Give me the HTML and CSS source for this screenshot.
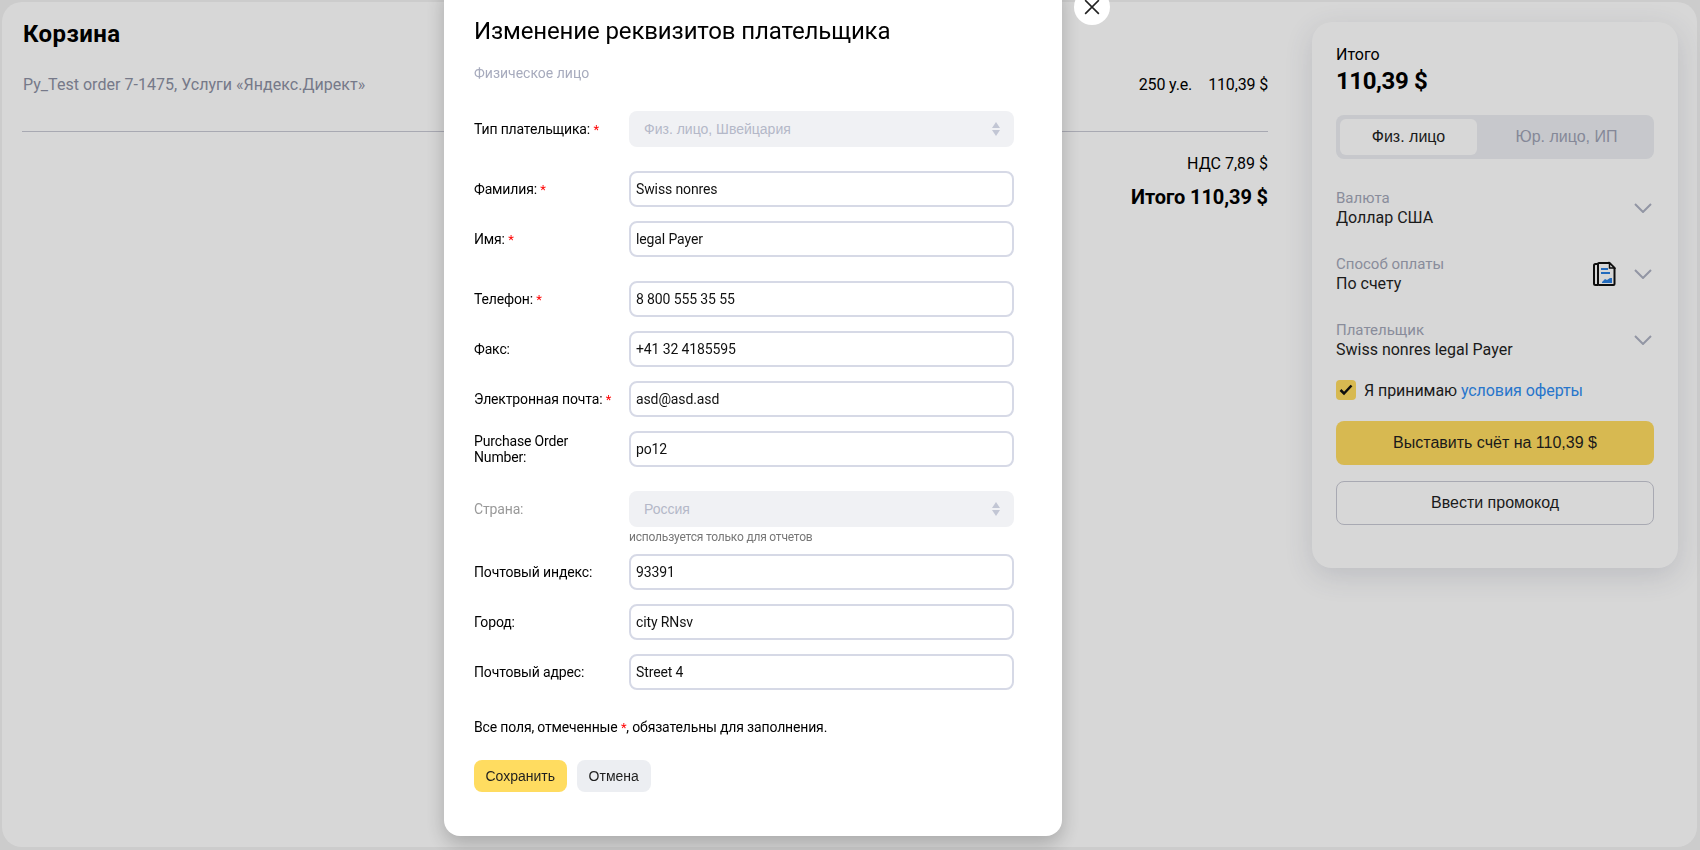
FILE: index.html
```html
<!DOCTYPE html>
<html lang="ru">
<head>
<meta charset="utf-8">
<title>Корзина</title>
<link rel="stylesheet" href="styles.css">
</head>
<body>
<div class="page">
  <main class="cart">
    <h1 class="cart-title">Корзина</h1>
    <div class="cart-row">
      <span class="cart-name">Py_Test order 7-1475, Услуги «Яндекс.Директ»</span>
      <span class="cart-prices"><span>250 у.е.</span><span>110,39 $</span></span>
    </div>
    <div class="cart-totals">
      <div class="vat">НДС 7,89 $</div>
      <div class="total">Итого 110,39 $</div>
    </div>
  </main>
  <aside class="side">
    <div class="side-label">Итого</div>
    <div class="side-sum">110,39 $</div>
    <div class="segment">
      <div class="seg-item seg-active">Физ. лицо</div>
      <div class="seg-item seg-other">Юр. лицо, ИП</div>
    </div>
    <div class="choice">
      <div class="choice-text"><div class="choice-name">Валюта</div><div class="choice-value">Доллар США</div></div>
      <svg class="chevron" viewBox="0 0 18 10"><path d="M1 1l8 8 8-8"/></svg>
    </div>
    <div class="choice">
      <div class="choice-text"><div class="choice-name">Способ оплаты</div><div class="choice-value">По счету</div></div>
      <svg class="doc" viewBox="0 0 24 26">
        <path class="doc-line" d="M6 3H3.500A1.500 1.500 0 0 0 2 4.500V22.500A1.500 1.500 0 0 0 3.500 24H6"/>
        <path class="doc-line" d="M7 2H17.500L22.500 7V23A1 1 0 0 1 21.500 24H7A1 1 0 0 1 6 23V3A1 1 0 0 1 7 2Z"/>
        <path class="doc-fold" d="M17.500 2L22.500 7H17.500Z"/>
        <path class="doc-blue" d="M9 7h7v2H9zM9 11h9v2H9zM10 21l3-3 2 1 3-2h2v5H10z"/>
      </svg>
      <svg class="chevron" viewBox="0 0 18 10"><path d="M1 1l8 8 8-8"/></svg>
    </div>
    <div class="choice">
      <div class="choice-text"><div class="choice-name">Плательщик</div><div class="choice-value">Swiss nonres legal Payer</div></div>
      <svg class="chevron" viewBox="0 0 18 10"><path d="M1 1l8 8 8-8"/></svg>
    </div>
    <div class="accept">
      <span class="check"><svg viewBox="0 0 14 12"><path d="M1.500 6l3.500 3.500 7.500-8"/></svg></span>
      <span>Я принимаю <a class="link" href="#">условия оферты</a></span>
    </div>
    <button class="side-btn side-btn-main">Выставить счёт на 110,39 $</button>
    <button class="side-btn side-btn-line">Ввести промокод</button>
  </aside>
</div>
<div class="overlay"></div>
<div class="modal-wrap">
  <section class="modal">
    <h2 class="modal-title">Изменение реквизитов плательщика</h2>
    <div class="modal-sub">Физическое лицо</div>
    <form class="form">
      <div class="row row-first"><label class="lbl">Тип плательщика: <i>*</i></label>
        <div class="select">Физ. лицо, Швейцария<svg class="updown" viewBox="0 0 8 14"><path d="M4 0l4 6H0zM4 14L0 8h8z"/></svg></div></div>
      <div class="row row-gap"><label class="lbl">Фамилия: <i>*</i></label><input class="inp" value="Swiss nonres"></div>
      <div class="row"><label class="lbl">Имя: <i>*</i></label><input class="inp" value="legal Payer"></div>
      <div class="row row-gap"><label class="lbl">Телефон: <i>*</i></label><input class="inp" value="8 800 555 35 55"></div>
      <div class="row"><label class="lbl">Факс:</label><input class="inp" value="+41 32 4185595"></div>
      <div class="row"><label class="lbl">Электронная почта: <i>*</i></label><input class="inp" value="asd@asd.asd"></div>
      <div class="row"><label class="lbl lbl-two">Purchase Order Number:</label><input class="inp" value="po12"></div>
      <div class="row row-gap"><label class="lbl lbl-off">Страна:</label>
        <div class="select">Россия<svg class="updown" viewBox="0 0 8 14"><path d="M4 0l4 6H0zM4 14L0 8h8z"/></svg></div></div>
      <div class="hint">используется только для отчетов</div>
      <div class="row row-after"><label class="lbl">Почтовый индекс:</label><input class="inp" value="93391"></div>
      <div class="row"><label class="lbl">Город:</label><input class="inp" value="city RNsv"></div>
      <div class="row"><label class="lbl">Почтовый адрес:</label><input class="inp" value="Street 4"></div>
      <p class="note">Все поля, отмеченные <i>*</i>, обязательны для заполнения.</p>
      <div class="actions">
        <button type="button" class="btn btn-save">Сохранить</button>
        <button type="button" class="btn btn-cancel">Отмена</button>
      </div>
    </form>
    <button class="close" aria-label="Закрыть"><svg viewBox="0 0 14 14"><path d="M1 1l12 12M13 1L1 13"/></svg></button>
  </section>
</div>
</body>
</html>
```
FILE: styles.css
```css
* { box-sizing: border-box; }
html, body { margin: 0; height: 100%; overflow: hidden; }
body {
  background: #f2f2f2;
  font-family: Roboto, "Liberation Sans", sans-serif;
  color: #000;
}
.page {
  position: relative;
  margin: 2px 3px 3px 2px;
  height: 845px;
  background: #fff;
  border-radius: 20px;
  display: flex;
  align-items: flex-start;
  padding: 20px 19px 0 20px;
}
.cart { flex: 1; min-width: 0; }
.cart-title { margin: 0 0 0 1px; font-size: 24px; line-height: 24px; font-weight: 700; letter-spacing: .4px; }
.cart-row {
  display: flex;
  justify-content: space-between;
  align-items: center;
  margin-top: 12px;
  height: 74px;
  padding: 0 0 20px 1px;
  border-bottom: 1px solid #c8c9d4;
  font-size: 16px;
}
.cart-name { color: #8c90a3; letter-spacing: .03px; }
.cart-prices { display: flex; gap: 16px; letter-spacing: -.15px; }
.cart-totals { margin-top: 21px; text-align: right; }
.vat { font-size: 16px; line-height: 22px; }
.total { margin-top: 10px; font-size: 20px; line-height: 24px; font-weight: 700; letter-spacing: -.1px; }

.side {
  width: 366px;
  height: 546px;
  margin-left: 44px;
  padding: 23px 24px 0;
  background: #fff;
  border-radius: 20px;
  box-shadow: 0 8px 28px rgba(60, 66, 100, .16);
  flex: none;
}
.side-label { font-size: 16px; line-height: 20px; }
.side-sum { margin-top: 1px; font-size: 24px; line-height: 30px; font-weight: 700; letter-spacing: -.4px; }
.segment {
  margin-top: 19px;
  height: 44px;
  padding: 4px;
  display: flex;
  background: #eceef2;
  border-radius: 8px;
  font-family: "Liberation Sans", sans-serif;
  font-size: 16px;
}
.seg-item { flex: 1; display: flex; align-items: center; justify-content: center; color: #9ea2b5; }
.seg-other { padding-left: 6px; }
.seg-active { flex: 0 0 137px; background: #fff; color: #1f1f1f; border-radius: 6px; }
.choice { display: flex; align-items: center; height: 41px; margin-top: 25px; }
.segment + .choice { margin-top: 28px; }
.choice-text { flex: 1; }
.choice-name { font-size: 15px; line-height: 20px; color: #a3a7b8; }
.choice-value { font-size: 16px; line-height: 20px; color: #1f1f1f; }
.chevron { width: 18px; height: 10px; margin-right: 2px; fill: none; stroke: #aeb2c3; stroke-width: 2; }
.doc { width: 24px; height: 26px; margin-right: 18px; }
.doc-line { fill: none; stroke: #111; stroke-width: 2; }
.doc-fold { fill: #fff; stroke: #111; stroke-width: 1.500; }
.doc-blue { fill: #2a7fe0; }
.accept { display: flex; align-items: center; gap: 8px; margin-top: 20px; height: 20px; font-size: 16px; color: #1f1f1f; letter-spacing: -.07px; }
.check {
  width: 20px; height: 20px;
  display: flex; align-items: center; justify-content: center;
  background: #ffdc60;
  border-radius: 4px;
}
.check svg { width: 14px; height: 12px; fill: none; stroke: #111; stroke-width: 2.500; }
.link { color: #2f8cf2; text-decoration: none; }
.side-btn {
  display: block;
  width: 100%;
  height: 44px;
  border-radius: 8px;
  font-family: "Liberation Sans", sans-serif;
  font-size: 16px;
  color: #1f1f1f;
}
.side-btn-main { margin-top: 21px; background: #ffdc60; border: 0; }
.side-btn-line { margin-top: 16px; background: #fff; border: 1px solid #c8c9d4; }

.overlay { position: fixed; inset: 0; background: rgba(0, 0, 0, .155); }
.modal-wrap { position: fixed; left: 444px; top: -20px; width: 618px; }
.modal {
  position: relative;
  height: 856px;
  padding: 31px 30px 0;
  background: #fff;
  border-radius: 16px;
  box-shadow: 0 8px 20px rgba(0, 0, 0, .22);
}
.modal-title { margin: 0; font-size: 24px; line-height: 40px; font-weight: 400; letter-spacing: -.13px; }
.modal-sub { margin-top: 12px; font-size: 14px; line-height: 20px; color: #a7abbd; }
.row { display: flex; align-items: center; height: 36px; margin-top: 14px; }
.row-first { margin-top: 28px; }
.row-gap { margin-top: 24px; }
.row-after { margin-top: 9px; }
.lbl { width: 155px; flex: none; font-size: 14px; line-height: 16px; color: #000; padding-right: 4px; letter-spacing: -.15px; }
.lbl-two { padding-right: 30px; }
.lbl i, .note i { color: #f00; font-style: normal; font-size: 13px; }
.lbl-off { color: #999; }
.inp {
  width: 385px;
  height: 36px;
  padding: 0 5px;
  border: 2px solid #d6d9e6;
  border-radius: 8px;
  font-family: Roboto, sans-serif;
  font-size: 14px;
  letter-spacing: -.12px;
  color: #111;
  background: #fff;
  outline: 0;
}
.select {
  position: relative;
  width: 385px;
  height: 36px;
  padding: 0 15px;
  display: flex;
  align-items: center;
  background: #f0f1f4;
  border-radius: 8px;
  font-family: "Liberation Sans", sans-serif;
  font-size: 14px;
  color: #b4b8c8;
}
.updown { position: absolute; right: 14px; top: 11px; width: 8px; height: 14px; fill: #c2c6d4; }
.hint { margin: 3px 0 0 155px; height: 15px; font-size: 12px; line-height: 15px; color: #777; letter-spacing: -.2px; }
.note { margin: 27px 0 0; font-size: 14px; line-height: 20px; letter-spacing: -.16px; }
.actions { display: flex; gap: 10px; margin-top: 22px; }
.btn {
  height: 32px;
  padding: 0 11.500px;
  border: 0;
  border-radius: 8px;
  font-family: "Liberation Sans", sans-serif;
  font-size: 14px;
  color: #1f1f1f;
}
.btn-save { background: #ffdc60; }
.btn-cancel { background: #eceef2; padding: 0 12px; }
.close {
  position: absolute;
  left: 630px;
  top: 9px;
  width: 36px;
  height: 36px;
  padding: 0;
  border: 0;
  border-radius: 50%;
  background: #fff;
  display: flex;
  align-items: center;
  justify-content: center;
}
.close svg { width: 16px; height: 16px; fill: none; stroke: #222; stroke-width: 1.400; }
```
